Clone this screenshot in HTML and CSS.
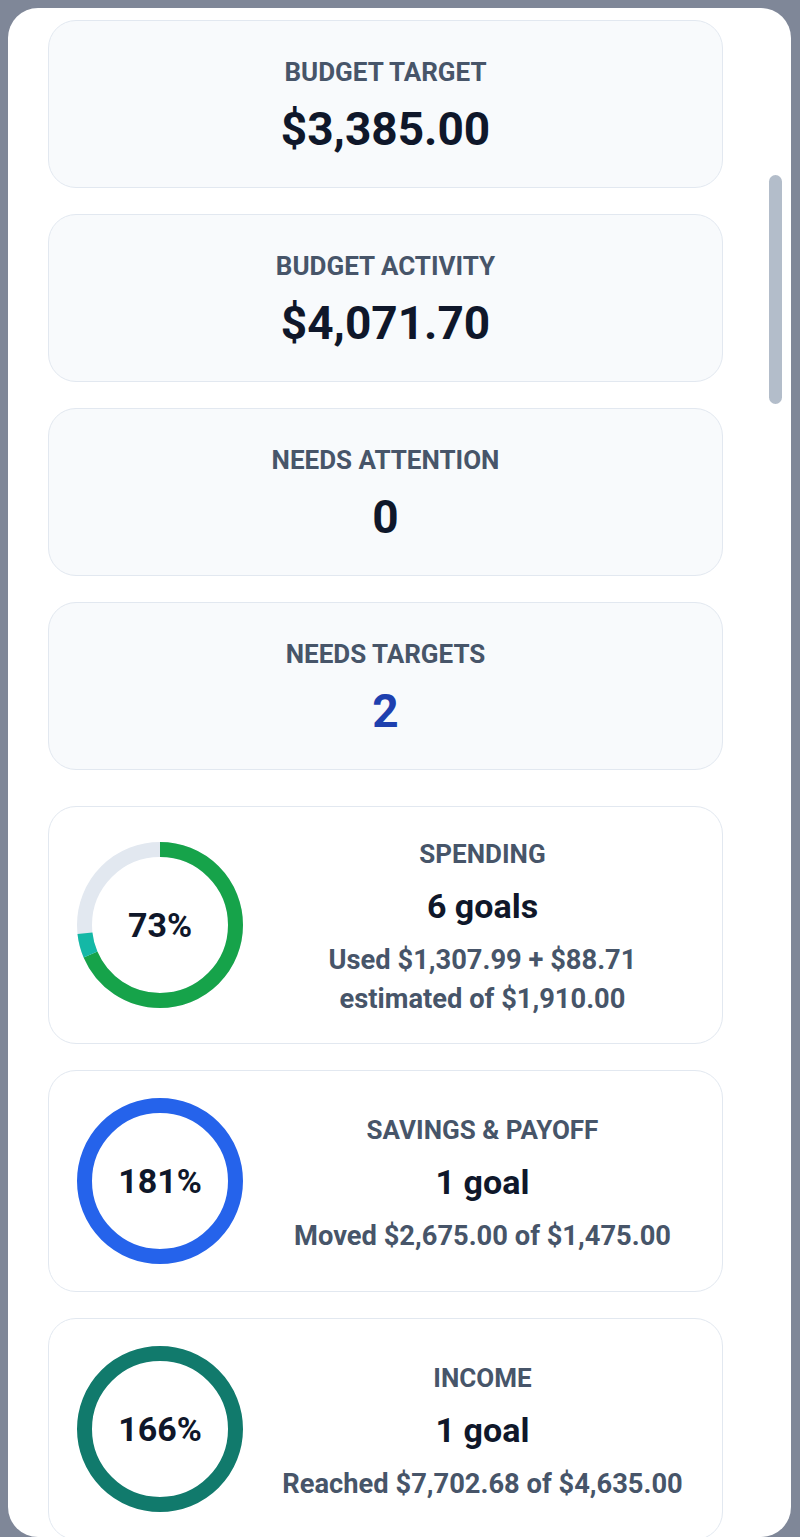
FILE: index.html
```html
<!DOCTYPE html>
<html lang="en">
<head>
<meta charset="utf-8">
<title>Budget summary</title>
<link rel="stylesheet" href="styles.css">
</head>
<body>
<div class="panel">
  <div class="content">
    <section class="stats">
      <div class="stat">
        <div class="stat-label">BUDGET TARGET</div>
        <div class="stat-value">$3,385.00</div>
      </div>
      <div class="stat">
        <div class="stat-label">BUDGET ACTIVITY</div>
        <div class="stat-value">$4,071.70</div>
      </div>
      <div class="stat">
        <div class="stat-label">NEEDS ATTENTION</div>
        <div class="stat-value">0</div>
      </div>
      <div class="stat">
        <div class="stat-label">NEEDS TARGETS</div>
        <div class="stat-value accent">2</div>
      </div>
    </section>

    <section class="goals">
      <div class="goal">
        <div class="ring">
          <svg viewBox="0 0 166 166" width="166" height="166">
            <g transform="rotate(-90 83 83)">
              <circle class="track" cx="83" cy="83" r="75.5"/>
              <circle class="seg green" cx="83" cy="83" r="75.5" stroke-dasharray="324.9 474.4"/>
              <circle class="seg teal" cx="83" cy="83" r="75.5" stroke-dasharray="0 324.9 22.0 474.4"/>
            </g>
          </svg>
          <span class="ring-pct">73%</span>
        </div>
        <div class="goal-text">
          <div class="goal-label">SPENDING</div>
          <div class="goal-title">6 goals</div>
          <div class="goal-detail">Used $1,307.99 + $88.71<br>estimated of $1,910.00</div>
        </div>
      </div>

      <div class="goal">
        <div class="ring">
          <svg viewBox="0 0 166 166" width="166" height="166">
            <circle class="seg blue" cx="83" cy="83" r="75.5"/>
          </svg>
          <span class="ring-pct">181%</span>
        </div>
        <div class="goal-text">
          <div class="goal-label">SAVINGS &amp; PAYOFF</div>
          <div class="goal-title">1 goal</div>
          <div class="goal-detail">Moved $2,675.00 of $1,475.00</div>
        </div>
      </div>

      <div class="goal">
        <div class="ring">
          <svg viewBox="0 0 166 166" width="166" height="166">
            <circle class="seg pine" cx="83" cy="83" r="75.5"/>
          </svg>
          <span class="ring-pct">166%</span>
        </div>
        <div class="goal-text">
          <div class="goal-label">INCOME</div>
          <div class="goal-title">1 goal</div>
          <div class="goal-detail">Reached $7,702.68 of $4,635.00</div>
        </div>
      </div>
    </section>
  </div>
  <div class="scrollbar"></div>
</div>
</body>
</html>
```

FILE: styles.css
```css
* { box-sizing: border-box; }

html, body {
  margin: 0;
  padding: 0;
}

body {
  background: #7f8798;
  font-family: Roboto, "Noto Sans", "Liberation Sans", sans-serif;
  color: #0f172a;
  height: 1537px;
  overflow: hidden;
}

.panel {
  position: relative;
  margin: 8px 9px 0 8px;
  height: 1529px;
  background: #ffffff;
  border-radius: 30px;
  overflow: hidden;
}

.content {
  padding: 12px 68px 0 40px;
}

.stats {
  display: flex;
  flex-direction: column;
  gap: 26px;
}

.stat {
  height: 168px;
  background: #f8fafc;
  border: 1px solid #e2e8f0;
  border-radius: 28px;
  display: flex;
  flex-direction: column;
  align-items: center;
  justify-content: center;
  padding-top: 2px;
}

.stat-label {
  font-size: 26px;
  line-height: 32px;
  font-weight: 700;
  color: #475569;
  margin-bottom: 16px;
}

.stat-value {
  font-size: 46px;
  line-height: 50px;
  font-weight: 700;
  color: #0f172a;
}

.stat-value.accent {
  color: #1e40af;
}

.goals {
  margin-top: 36px;
  display: flex;
  flex-direction: column;
  gap: 26px;
}

.goal {
  background: #ffffff;
  border: 1px solid #e2e8f0;
  border-radius: 28px;
  padding: 27px 28px;
  display: flex;
  align-items: center;
  gap: 28px;
}

.ring {
  position: relative;
  width: 166px;
  height: 166px;
  flex: none;
}

.ring svg {
  display: block;
}

.ring circle {
  fill: none;
  stroke-width: 15;
}

.ring .track { stroke: #e2e8f0; }
.ring .green { stroke: #16a34a; }
.ring .teal { stroke: #14b8a6; }
.ring .blue { stroke: #2563eb; }
.ring .pine { stroke: #117a6c; }

.ring-pct {
  position: absolute;
  inset: 0;
  display: flex;
  align-items: center;
  justify-content: center;
  font-size: 34px;
  font-weight: 700;
  color: #0f172a;
}

.goal-text {
  flex: 1;
  text-align: center;
  padding-top: 4px;
  margin-bottom: -3px;
}

.goal-label {
  font-size: 26px;
  line-height: 32px;
  font-weight: 700;
  color: #475569;
  margin-bottom: 16px;
}

.goal-title {
  font-size: 34px;
  line-height: 40px;
  font-weight: 700;
  color: #0f172a;
  margin-bottom: 15px;
}

.goal-detail {
  font-size: 27.3px;
  line-height: 39px;
  font-weight: 700;
  color: #475569;
}

.scrollbar {
  position: absolute;
  left: 761px;
  top: 167px;
  width: 13px;
  height: 229px;
  background: #b3bdca;
  border-radius: 7px;
}
```
